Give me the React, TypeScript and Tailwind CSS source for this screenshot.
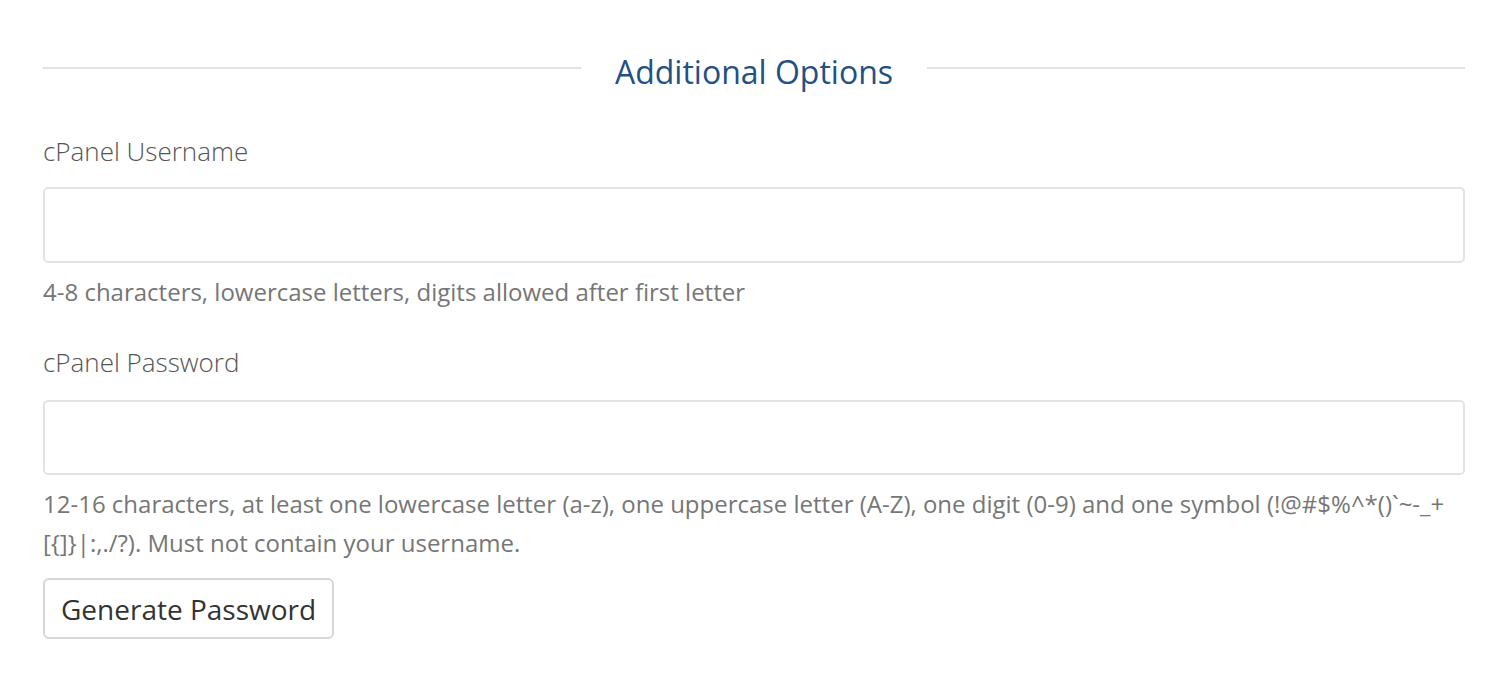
import React from 'react';

const passwordHelp =
  '12-16 characters, at least one lowercase letter (a-z), one uppercase letter (A-Z), one digit (0-9) and one symbol (!@#$%^*()`~-_+[{]}|:,./?). Must not contain your username.';

const App: React.FC = () => {
  return (
    <div className="bg-white pl-[43px] pr-[33px] pt-[52px]" style={{ fontFamily: '"Open Sans", "Noto Sans", sans-serif' }}>
      {/* Section title */}
      <div className="flex items-center gap-[34px]">
        <div className="flex-1 h-[2px] bg-[#e2e2e2] mb-[8px]" />
        <h2 className="text-[32px] leading-[40px] text-[#1f5185]">Additional Options</h2>
        <div className="flex-1 h-[2px] bg-[#e2e2e2] mb-[8px]" />
      </div>

      {/* Username */}
      <div className="mt-[42px]">
        <label className="block text-[26px] leading-[34px] font-light text-[#555555]">cPanel Username</label>
        <input
          type="text"
          className="mt-[19px] block w-full h-[76px] rounded-[5px] border-2 border-[#e3e3e3] px-4 text-[22px] outline-none"
        />
        <p className="mt-[9px] text-[24px] leading-[39px] text-[#767676]">
          4-8 characters, lowercase letters, digits allowed after first letter
        </p>
      </div>

      {/* Password */}
      <div className="mt-[34px]">
        <label className="block text-[26px] leading-[34px] font-light text-[#555555]">cPanel Password</label>
        <input
          type="password"
          className="mt-[21px] block w-full h-[75px] rounded-[5px] border-2 border-[#e3e3e3] px-4 text-[22px] outline-none"
        />
        <p className="mt-[9px] text-[24px] leading-[39px] text-[#767676]">{passwordHelp}</p>
        <button
          type="button"
          className="mt-[16px] h-[61px] px-[16px] rounded-[6px] border-2 border-[#d6d6d6] bg-white text-[28px] text-[#333333]"
        >
          Generate Password
        </button>
      </div>
    </div>
  );
};

export default App;
